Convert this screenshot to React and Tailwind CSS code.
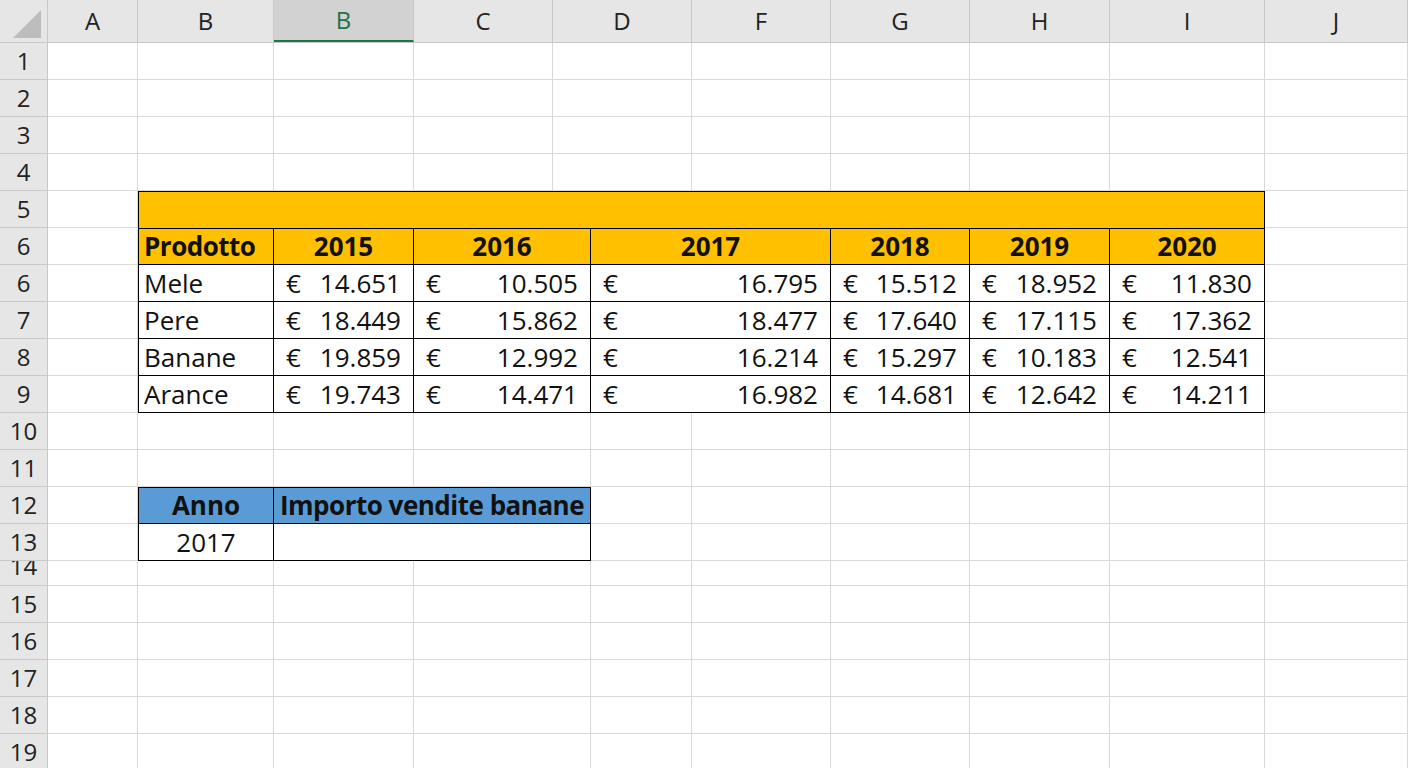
const U=[48,138,274,414,553,692,831,970,1110,1265,1408];
const L=[48,138,274,414,591,692,831,970,1110,1265,1408];
const T=[138,274,414,591,831,970,1110,1265];
const font={fontFamily:'"Open Sans","Liberation Sans",sans-serif'};

function Head({n,h,clip}){return <div className={`w-[48px] shrink-0 bg-[#e6e6e6] border-b border-r border-[#c8c8c8] flex justify-center text-[24px] text-[#222] overflow-hidden ${clip?'items-start leading-[10px]':'items-center'}`} style={{height:h}}>{n}</div>}

function Grid({b,h}){return <>{b.slice(1).map((x,i)=><div key={i} className="shrink-0 border-r border-b border-[#d9d9d9]" style={{width:x-b[i],height:h}}/>)}</>}

function Money({v}){return <div className="flex justify-between pl-[12px] pr-[12px] w-full"><span>€</span><span>{v}</span></div>}

const data=[["6","Mele",["14.651","10.505","16.795","15.512","18.952","11.830"]],["7","Pere",["18.449","15.862","18.477","17.640","17.115","17.362"]],["8","Banane",["19.859","12.992","16.214","15.297","10.183","12.541"]],["9","Arance",["19.743","14.471","16.982","14.681","12.642","14.211"]]];

function TableRow({n,cells,bg}){
  return <div className="flex h-[37px]">
    <Head n={n} h={37}/>
    <div className="w-[90px] shrink-0 border-r border-b border-[#d9d9d9]"/>
    <div className={`flex ${bg} border-black border-l border-b`}>
      {cells.map((c,i)=><div key={i} className="shrink-0 border-r border-black flex items-center text-[26px] text-[#111] whitespace-nowrap" style={{width:T[i+1]-T[i]-(i===0?1:0)}}>{c}</div>)}
    </div>
    <Grid b={[1265,1408]} h={37}/>
  </div>
}

export default function App(){
  return <div className="w-[1408px] h-[768px] overflow-hidden bg-white" style={font}>
    <div className="flex h-[43px] bg-[#e6e6e6] border-b border-[#c8c8c8]">
      <div className="w-[48px] shrink-0 border-r border-[#c8c8c8] relative">
        <div className="absolute right-[6px] bottom-[4px] w-0 h-0 border-l-[28px] border-l-transparent border-b-[28px] border-b-[#bdbdbd]"/>
      </div>
      {["A","B","B","C","D","F","G","H","I","J"].map((c,i)=><div key={i} className={`shrink-0 flex items-center justify-center text-[24px] border-r border-[#c8c8c8] ${i===2?'bg-[#d2d2d2] text-[#217346] border-b-2 border-b-[#217346]':'text-[#222]'}`} style={{width:U[i+1]-U[i]}}>{c}</div>)}
    </div>
    {[1,2,3,4].map(r=><div key={r} className="flex"><Head n={r} h={37}/><Grid b={U} h={37}/></div>)}
    <div className="flex h-[37px]">
      <Head n="5" h={37}/>
      <div className="w-[90px] shrink-0 border-r border-b border-[#d9d9d9]"/>
      <div className="w-[1127px] bg-[#ffc000] border border-black border-b-0"/>
      <Grid b={[1265,1408]} h={37}/>
    </div>
    <TableRow n="6" bg="bg-[#ffc000] border-t" cells={[<span className="font-bold px-[5px] tracking-[-0.5px]">Prodotto</span>,...["2015","2016","2017","2018","2019","2020"].map(y=><span className="font-bold w-full text-center">{y}</span>)]}/>
    {data.map(([n,name,vals])=><TableRow key={name} n={n} bg="" cells={[<span className="px-[5px]">{name}</span>,...vals.map(v=><Money v={v}/>)]}/>)}
    {[10,11].map(r=><div key={r} className="flex"><Head n={r} h={37}/><Grid b={L} h={37}/></div>)}
    <div className="flex h-[37px]">
      <Head n="12" h={37}/>
      <div className="w-[90px] shrink-0 border-r border-b border-[#d9d9d9]"/>
      <div className="flex bg-[#5b9bd5] border border-black text-[26px] font-bold text-[#111]">
        <div className="w-[135px] border-r border-black flex items-center justify-center">Anno</div>
        <div className="w-[316px] flex items-center justify-center whitespace-nowrap tracking-[-0.5px]">Importo vendite banane</div>
      </div>
      <Grid b={L.slice(4)} h={37}/>
    </div>
    <div className="flex h-[37px]">
      <Head n="13" h={37}/>
      <div className="w-[90px] shrink-0 border-r border-b border-[#d9d9d9]"/>
      <div className="flex border-l border-r border-b border-black text-[26px] text-[#111]">
        <div className="w-[135px] border-r border-black flex items-center justify-center">2017</div>
        <div className="w-[316px]"/>
      </div>
      <Grid b={L.slice(4)} h={37}/>
    </div>
    <div className="flex"><Head n="14" h={25} clip/><Grid b={L} h={25}/></div>
    {[15,16,17,18,19].map(r=><div key={r} className="flex"><Head n={r} h={37}/><Grid b={L} h={37}/></div>)}
  </div>
}
